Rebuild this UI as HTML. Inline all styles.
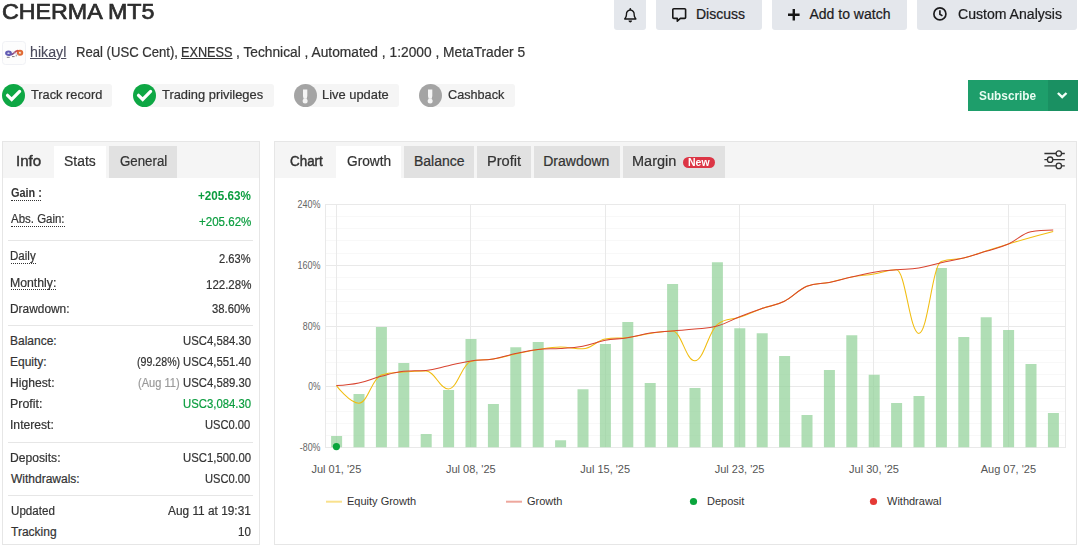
<!DOCTYPE html>
<html lang="en">
<head>
<meta charset="utf-8">
<title>CHERMA MT5</title>
<style>
html,body{margin:0;padding:0;background:#fff;}
body{width:1079px;height:546px;position:relative;overflow:hidden;font-family:"Liberation Sans",sans-serif;color:#333;}
.a{position:absolute;box-sizing:border-box;}
.t{position:absolute;white-space:pre;transform-origin:0 50%;}
.btn{position:absolute;top:-6px;height:35.8px;background:#e4e7ec;border-radius:3px;}
.badge{position:absolute;top:84.1px;height:22.7px;background:#f5f5f5;border-radius:3px;}
.ci{position:absolute;top:83.8px;width:23px;height:23px;border-radius:50%;}
.panel{position:absolute;box-sizing:border-box;border:1px solid #e6e6e6;background:#fff;}
.hd{position:absolute;background:#f5f5f5;}
.tab{position:absolute;top:146.3px;height:31.4px;background:#e1e1e1;}
.tab.on{background:#fff;}
.sep{position:absolute;left:8px;width:245px;height:1px;background:#e6e6e6;}
.dot{position:absolute;height:0;border-bottom:1px dotted #333;}
svg.i{position:absolute;overflow:visible;}
</style>
</head>
<body>
<div id="w" style="position:absolute;left:0;top:0;width:1079px;height:546px;">
<!-- top buttons -->
<div class="btn" style="left:613.9px;width:32.1px"></div>
<div class="btn" style="left:656px;width:105.8px"></div>
<div class="btn" style="left:771.8px;width:135px"></div>
<div class="btn" style="left:916.8px;width:160px"></div>
<!-- bell -->
<svg class="i" style="left:623.7px;top:7.7px" width="12.6" height="14.4" viewBox="0 0 448 512"><path fill="#161616" d="M224 0c-17.700 0-32 14.300-32 32V51.200C119 66 64 130.600 64 208v25.400c0 45.400-15.500 89.500-43.800 124.900L5.300 377c-5.800 7.200-6.900 17.100-2.900 25.400S14.800 416 24 416H424c9.200 0 17.600-5.300 21.600-13.600s2.900-18.200-2.900-25.400l-14.900-18.600C399.500 322.900 384 278.800 384 233.400V208c0-77.400-55-142-128-156.800V32c0-17.700-14.300-32-32-32zm0 96c61.900 0 112 50.100 112 112v25.400c0 47.900 13.900 94.600 39.700 134.600H72.300C98.100 328 112 281.300 112 233.400V208c0-61.900 50.100-112 112-112zm64 352H224 160c0 17 6.700 33.300 18.700 45.300s28.300 18.700 45.300 18.700s33.300-6.700 45.300-18.700s18.700-28.300 18.700-45.300z"/></svg>
<!-- comment -->
<svg class="i" style="left:672px;top:7.9px" width="14.4" height="14" viewBox="0 0 14.4 14"><path fill="none" stroke="#161616" stroke-width="1.6" stroke-linejoin="round" d="M1.800 .8h10.800a1 1 0 0 1 1 1v7.600a1 1 0 0 1 -1 1H8.400L5.300 13.200V10.400H1.800a1 1 0 0 1 -1 -1V1.800a1 1 0 0 1 1 -1z"/></svg>
<!-- plus -->
<svg class="i" style="left:787.5px;top:8.6px" width="11.6" height="11.6" viewBox="0 0 12 12"><path fill="none" stroke="#161616" stroke-width="2.5" d="M6 0V12M0 6H12"/></svg>
<!-- clock -->
<svg class="i" style="left:933.1px;top:7.4px" width="13.800" height="13.800" viewBox="0 0 14 14"><circle cx="7" cy="7" r="6.100" fill="none" stroke="#1c1c1e" stroke-width="1.700"/><path fill="none" stroke="#1c1c1e" stroke-width="1.700" d="M7 3.300V7.300L9.600 9"/></svg>

<!-- avatar -->
<div class="a" style="left:2.2px;top:41.3px;width:23.6px;height:23.3px;border:1px solid #f0f1f5;border-radius:3.5px;background:#fdfdfd"></div>
<svg class="i" style="left:2px;top:41px" width="24" height="24" viewBox="2 41 24 24"><defs><linearGradient id="lg" x1="0" x2="1" y1="0" y2="0"><stop offset="0" stop-color="#6a52a8"/><stop offset="1" stop-color="#d8483c"/></linearGradient><filter id="bl" x="-20%" y="-20%" width="140%" height="140%"><feGaussianBlur stdDeviation=".6"/></filter></defs><g filter="url(#bl)" fill="none" stroke-linecap="round"><ellipse cx="8.500" cy="53.200" rx="2.300" ry="1.700" stroke="#625cb4" stroke-width="2.200"/><ellipse cx="20" cy="52.700" rx="2.200" ry="1.900" stroke="#e06a35" stroke-width="2.100"/><circle cx="20.300" cy="53.100" r=".9" fill="#e9b98f" stroke="none"/><path d="M11 54.600C13.500 54.800 14.500 51 17.800 50.600" stroke="url(#lg)" stroke-width="1.600"/><path d="M13 51.800C14.500 53 16 54.500 18 54.800" stroke="#b9b3cf" stroke-width=".7"/><path d="M7.200 57.300H9.300M12.400 56.600H14.200" stroke="#5c5560" stroke-width=".8"/><circle cx="16.200" cy="55.700" r=".5" fill="#333" stroke="none"/></g></svg>

<!-- badges -->
<div class="badge" style="left:12px;width:100.4px"></div>
<div class="badge" style="left:143px;width:130.5px"></div>
<div class="badge" style="left:304px;width:94.9px"></div>
<div class="badge" style="left:429px;width:85.6px"></div>
<div class="ci" style="left:2px;background:#0ea744"></div>
<div class="ci" style="left:132.9px;background:#0ea744"></div>
<div class="ci" style="left:293.9px;background:#a4a4a4"></div>
<div class="ci" style="left:418.9px;background:#a4a4a4"></div>
<svg class="i" style="left:2px;top:83.8px" width="23" height="23" viewBox="0 0 23 23"><path d="M5.500 11.300L9.700 15.400L17.600 7.400" fill="none" stroke="#fff" stroke-width="3.200" stroke-linecap="round" stroke-linejoin="miter"/></svg>
<svg class="i" style="left:132.9px;top:83.8px" width="23" height="23" viewBox="0 0 23 23"><path d="M5.500 11.300L9.700 15.400L17.600 7.400" fill="none" stroke="#fff" stroke-width="3.200" stroke-linecap="round" stroke-linejoin="miter"/></svg>
<svg class="i" style="left:293.9px;top:83.800px" width="23" height="23" viewBox="0 0 23 23"><path d="M9 5.400h4.300v6.500l-.6 2.900h-3.100l-.6 -2.900z" fill="#f4f4f4"/><circle cx="11.150" cy="17" r="2.500" fill="#f4f4f4"/></svg>
<svg class="i" style="left:418.9px;top:83.800px" width="23" height="23" viewBox="0 0 23 23"><path d="M9 5.400h4.300v6.500l-.6 2.900h-3.100l-.6 -2.900z" fill="#f4f4f4"/><circle cx="11.150" cy="17" r="2.500" fill="#f4f4f4"/></svg>

<!-- subscribe -->
<div class="a" style="left:967.8px;top:80px;width:110px;height:30.5px;background:#1e9e6b"></div>
<div class="a" style="left:1047.8px;top:80px;width:30px;height:30.500px;background:#1a9062"></div>
<svg class="i" style="left:1057.400px;top:91.600px" width="10.400" height="6.800" viewBox="0 0 10.400 6.800"><path d="M.9 1L5.200 5.200L9.500 1" fill="none" stroke="#f2fff8" stroke-width="2.400"/></svg>

<!-- left panel -->
<div class="panel" style="left:2px;top:141px;width:257.5px;height:403.6px"></div>
<div class="hd" style="left:3px;top:142px;width:255.500px;height:35.700px"></div>
<div class="tab on" style="left:54px;width:51.500px"></div>
<div class="tab" style="left:109px;width:67.800px"></div>
<div class="sep" style="top:240px"></div>
<div class="sep" style="top:325px"></div>
<div class="sep" style="top:442px"></div>
<div class="sep" style="top:495px"></div>
<div class="dot" style="left:11px;width:30px;top:200px"></div>
<div class="dot" style="left:11px;width:53.500px;top:226px"></div>
<div class="dot" style="left:11px;width:25px;top:262.600px"></div>
<div class="dot" style="left:11px;width:45px;top:289px"></div>

<!-- chart panel -->
<div class="panel" style="left:274px;top:141px;width:803px;height:403.600px"></div>
<div class="hd" style="left:275px;top:142px;width:801px;height:35.700px"></div>
<div class="tab on" style="left:336px;width:65px"></div>
<div class="tab" style="left:404px;width:69.800px"></div>
<div class="tab" style="left:476.800px;width:54px"></div>
<div class="tab" style="left:534px;width:86px"></div>
<div class="tab" style="left:623px;width:102px"></div>
<div class="a" style="left:682.500px;top:157px;width:32.500px;height:10.600px;border-radius:6px;background:#dc3545"></div>
<!-- sliders icon -->
<svg class="i" style="left:1044px;top:150px" width="21" height="20" viewBox="0 0 21 20"><g fill="none" stroke="#333" stroke-width="1.3"><path d="M.4 3.500H12M17.600 3.500H20.800M.4 9.700H3.300M8.900 9.700H20.800M.4 15.900H12M17.600 15.900H20.800"/><circle cx="14.800" cy="3.500" r="2.700"/><circle cx="6.100" cy="9.700" r="2.700"/><circle cx="14.800" cy="15.900" r="2.700"/></g></svg>
<svg class="chart" width="1079" height="546" viewBox="0 0 1079 546" style="position:absolute;left:0;top:0">
<path d="M325.0 216.50H1065.5M325.0 228.50H1065.5M325.0 240.50H1065.5M325.0 253.50H1065.5M325.0 277.50H1065.5M325.0 289.50H1065.5M325.0 301.50H1065.5M325.0 313.50H1065.5M325.0 338.50H1065.5M325.0 350.50H1065.5M325.0 362.50H1065.5M325.0 374.50H1065.5M325.0 398.50H1065.5M325.0 411.50H1065.5M325.0 423.50H1065.5M325.0 435.50H1065.5" stroke="#f8f8f8" stroke-width="1" fill="none" shape-rendering="crispEdges"/>
<path d="M325.0 204.50H1065.5M325.0 265.50H1065.5M325.0 326.50H1065.5M325.0 386.50H1065.5M325.0 447.50H1065.5M336.50 204.52V447.52M470.50 204.52V447.52M605.50 204.52V447.52M739.50 204.52V447.52M873.50 204.52V447.52M1008.50 204.52V447.52M325.5 204.52V447.52M1065.5 204.52V447.52" stroke="#e9e9e9" stroke-width="1" fill="none" shape-rendering="crispEdges"/>
<path d="M331.1 436.0h11V447.3h-11zM353.5 394.1h11V447.3h-11zM375.9 327.0h11V447.3h-11zM398.3 363.0h11V447.3h-11zM420.7 434.0h11V447.3h-11zM443.1 390.0h11V447.3h-11zM465.5 339.0h11V447.3h-11zM487.9 404.1h11V447.3h-11zM510.3 347.3h11V447.3h-11zM532.7 342.0h11V447.3h-11zM555.1 440.3h11V447.3h-11zM577.5 389.2h11V447.3h-11zM599.9 344.1h11V447.3h-11zM622.3 322.1h11V447.3h-11zM644.7 383.1h11V447.3h-11zM667.1 284.0h11V447.3h-11zM689.5 388.1h11V447.3h-11zM711.9 262.2h11V447.3h-11zM734.3 328.2h11V447.3h-11zM756.7 333.2h11V447.3h-11zM779.1 356.0h11V447.3h-11zM801.5 415.0h11V447.3h-11zM823.9 370.1h11V447.3h-11zM846.3 335.2h11V447.3h-11zM868.7 374.8h11V447.3h-11zM891.1 403.0h11V447.3h-11zM913.5 396.0h11V447.3h-11zM935.9 268.0h11V447.3h-11zM958.3 337.1h11V447.3h-11zM980.7 317.3h11V447.3h-11zM1003.1 330.1h11V447.3h-11zM1025.5 364.0h11V447.3h-11zM1047.9 413.0h11V447.3h-11z" fill="#8fd095" fill-opacity="0.7"/>
<path d="M336.4 385.6C336.4 385.6 349.8 403.2 358.8 403.2C367.8 403.2 372.2 378.0 381.2 375.0C390.2 372.0 394.6 372.8 403.6 372.0C412.6 371.2 417.0 371.0 426.0 371.0C435.0 371.0 439.4 388.9 448.4 388.9C457.4 388.9 461.8 364.2 470.8 361.6C479.8 359.0 484.2 360.5 493.2 359.0C502.2 357.5 506.6 355.9 515.6 354.0C524.6 352.1 529.0 350.9 538.0 349.5C547.0 348.1 551.4 347.0 560.4 347.0C569.4 347.0 573.8 348.8 582.8 348.8C591.8 348.8 596.2 340.7 605.2 339.1C614.2 337.5 618.6 338.6 627.6 337.5C636.6 336.4 641.0 334.8 650.0 333.5C659.0 332.2 663.4 331.0 672.4 331.0C681.4 331.0 685.8 360.8 694.8 360.8C703.8 360.8 708.2 331.9 717.2 324.6C726.2 317.3 730.6 320.5 739.6 317.3C748.6 314.1 753.0 311.7 762.0 308.5C771.0 305.3 775.4 305.7 784.4 301.2C793.4 296.7 797.8 290.0 806.8 286.2C815.8 282.4 820.2 284.2 829.2 282.4C838.2 280.6 842.6 278.8 851.6 277.1C860.6 275.4 865.0 275.4 874.0 273.9C883.0 272.4 887.4 269.8 896.4 269.8C905.4 269.8 909.8 333.4 918.8 333.4C927.8 333.4 932.2 265.2 941.2 261.6C950.2 258.0 954.6 260.1 963.6 258.0C972.6 255.9 977.0 253.8 986.0 251.0C995.0 248.2 999.4 246.7 1008.4 244.0C1017.4 241.3 1021.8 240.0 1030.8 237.5C1039.8 235.0 1053.2 231.4 1053.2 231.4" stroke="#f1bd10" stroke-width="1.05" fill="none" stroke-linejoin="round"/>
<path d="M336.4 385.6C336.4 385.6 349.8 384.9 358.8 383.0C367.8 381.1 372.2 378.5 381.2 376.2C390.2 373.9 394.6 372.2 403.6 371.3C412.6 370.4 417.0 371.3 426.0 370.4C435.0 369.5 439.4 367.6 448.4 365.7C457.4 363.8 461.8 362.3 470.8 361.0C479.8 359.7 484.2 360.5 493.2 359.0C502.2 357.5 506.6 355.5 515.6 353.6C524.6 351.7 529.0 350.3 538.0 349.4C547.0 348.5 551.4 349.1 560.4 348.5C569.4 347.9 573.8 347.8 582.8 346.2C591.8 344.6 596.2 342.0 605.2 340.3C614.2 338.6 618.6 339.2 627.6 337.7C636.6 336.2 641.0 334.4 650.0 333.0C659.0 331.6 663.4 331.7 672.4 330.9C681.4 330.1 685.8 330.1 694.8 329.1C703.8 328.1 708.2 328.6 717.2 326.1C726.2 323.6 730.6 320.2 739.6 316.7C748.6 313.2 753.0 311.6 762.0 308.5C771.0 305.4 775.4 305.7 784.4 301.2C793.4 296.7 797.8 290.0 806.8 286.2C815.8 282.4 820.2 284.2 829.2 282.4C838.2 280.6 842.6 279.1 851.6 277.1C860.6 275.1 865.0 273.7 874.0 272.2C883.0 270.7 887.4 270.6 896.4 269.8C905.4 269.0 909.8 269.4 918.8 268.0C927.8 266.6 932.2 264.7 941.2 262.7C950.2 260.7 954.6 260.3 963.6 258.0C972.6 255.7 977.0 254.1 986.0 251.3C995.0 248.5 999.4 247.9 1008.4 244.0C1017.4 240.1 1021.8 233.5 1030.8 231.7C1039.8 229.9 1053.2 229.9 1053.2 229.9" stroke="#d8432f" stroke-width="1.05" fill="none" stroke-linejoin="round"/>
<circle cx="336.4" cy="446.6" r="3.6" fill="#0aa53c"/>
<g font-family="'Liberation Sans', sans-serif" font-size="10" fill="#666" text-anchor="end">
<text x="320.4" y="208.1" textLength="23" lengthAdjust="spacingAndGlyphs">240%</text>
<text x="320.4" y="268.9" textLength="23" lengthAdjust="spacingAndGlyphs">160%</text>
<text x="320.4" y="329.6" textLength="17.6" lengthAdjust="spacingAndGlyphs">80%</text>
<text x="320.4" y="390.4" textLength="12.2" lengthAdjust="spacingAndGlyphs">0%</text>
<text x="320.4" y="451.1" textLength="20.6" lengthAdjust="spacingAndGlyphs">-80%</text>
</g>
<g font-family="'Liberation Sans', sans-serif" font-size="11" fill="#555" text-anchor="middle">
<text x="336.4" y="472.7">Jul 01, '25</text>
<text x="470.8" y="472.7">Jul 08, '25</text>
<text x="605.2" y="472.7">Jul 15, '25</text>
<text x="739.6" y="472.7">Jul 23, '25</text>
<text x="874.0" y="472.7">Jul 30, '25</text>
<text x="1008.4" y="472.7">Aug 07, '25</text>
</g>
<g font-family="'Liberation Sans', sans-serif" font-size="11" fill="#333">
<path d="M326 501.7H342" stroke="#f3c31c" stroke-opacity=".5" stroke-width="2"/>
<text x="347" y="504.7">Equity Growth</text>
<path d="M506 501.7H522" stroke="#dd4f3c" stroke-opacity=".5" stroke-width="2"/>
<text x="527" y="504.7">Growth</text>
<circle cx="693.5" cy="501.5" r="3.6" fill="#0aa53c"/>
<text x="707" y="504.7">Deposit</text>
<circle cx="873.5" cy="501.5" r="3.6" fill="#e53935"/>
<text x="887" y="504.7">Withdrawal</text>
</g>
</svg>
<span class="t" style="left:2.20px;top:1.42px;font:400 22.3px/22.3px 'Liberation Sans', sans-serif;color:#2d2d2d;transform:scaleX(1.0425);-webkit-text-stroke:0.7px #2d2d2d;">CHERMA MT5</span>
<span class="t" style="left:30.09px;top:44.85px;font:400 14px/14px 'Liberation Sans', sans-serif;color:#4a4a5c;transform:scaleX(1.0147);-webkit-text-stroke:0.12px #4a4a5c;text-decoration:underline;text-underline-offset:1px;">hikayl</span>
<span class="t" style="left:75.56px;top:44.85px;font:400 14px/14px 'Liberation Sans', sans-serif;color:#333;transform:scaleX(0.9355);-webkit-text-stroke:0.22px #333;">Real (USC Cent),</span>
<span class="t" style="left:180.59px;top:44.85px;font:400 14px/14px 'Liberation Sans', sans-serif;color:#333;transform:scaleX(0.9071);-webkit-text-stroke:0.22px #333;text-decoration:underline;text-underline-offset:1px;">EXNESS</span>
<span class="t" style="left:236.02px;top:44.85px;font:400 14px/14px 'Liberation Sans', sans-serif;color:#333;transform:scaleX(0.9829);-webkit-text-stroke:0.22px #333;">, Technical , Automated , 1:2000 , MetaTrader 5</span>
<span class="t" style="left:31.20px;top:87.69px;font:400 13px/13px 'Liberation Sans', sans-serif;color:#333;transform:scaleX(0.9833);-webkit-text-stroke:0.22px #333;">Track record</span>
<span class="t" style="left:162.00px;top:87.69px;font:400 13px/13px 'Liberation Sans', sans-serif;color:#333;transform:scaleX(0.9902);-webkit-text-stroke:0.22px #333;">Trading privileges</span>
<span class="t" style="left:321.81px;top:87.69px;font:400 13px/13px 'Liberation Sans', sans-serif;color:#333;transform:scaleX(0.9924);-webkit-text-stroke:0.22px #333;">Live update</span>
<span class="t" style="left:448.00px;top:87.69px;font:400 13px/13px 'Liberation Sans', sans-serif;color:#333;transform:scaleX(0.9741);-webkit-text-stroke:0.22px #333;">Cashback</span>
<span class="t" style="left:696.00px;top:7.15px;font:400 14px/14px 'Liberation Sans', sans-serif;color:#1c1c1e;transform:scaleX(1.0000);-webkit-text-stroke:0.22px #1c1c1e;">Discuss</span>
<span class="t" style="left:809.50px;top:7.15px;font:400 14px/14px 'Liberation Sans', sans-serif;color:#1c1c1e;transform:scaleX(1.0000);-webkit-text-stroke:0.22px #1c1c1e;">Add to watch</span>
<span class="t" style="left:957.50px;top:7.15px;font:400 14px/14px 'Liberation Sans', sans-serif;color:#1c1c1e;transform:scaleX(1.0049);-webkit-text-stroke:0.22px #1c1c1e;">Custom Analysis</span>
<span class="t" style="left:979.20px;top:88.99px;font:700 13px/13px 'Liberation Sans', sans-serif;color:#e9fcf2;transform:scaleX(0.9095);">Subscribe</span>
<span class="t" style="left:15.92px;top:153.95px;font:400 14px/14px 'Liberation Sans', sans-serif;color:#333;transform:scaleX(1.0795);-webkit-text-stroke:0.42px #333;">Info</span>
<span class="t" style="left:64.20px;top:153.95px;font:400 14px/14px 'Liberation Sans', sans-serif;color:#333;transform:scaleX(0.9937);-webkit-text-stroke:0.22px #333;">Stats</span>
<span class="t" style="left:120.00px;top:153.95px;font:400 14px/14px 'Liberation Sans', sans-serif;color:#333;transform:scaleX(0.9490);-webkit-text-stroke:0.22px #333;">General</span>
<span class="t" style="left:289.50px;top:153.95px;font:400 14px/14px 'Liberation Sans', sans-serif;color:#333;transform:scaleX(0.9571);-webkit-text-stroke:0.45px #333;">Chart</span>
<span class="t" style="left:346.75px;top:153.95px;font:400 14px/14px 'Liberation Sans', sans-serif;color:#333;transform:scaleX(0.9778);-webkit-text-stroke:0.22px #333;">Growth</span>
<span class="t" style="left:414.00px;top:153.95px;font:400 14px/14px 'Liberation Sans', sans-serif;color:#333;transform:scaleX(1.0000);-webkit-text-stroke:0.22px #333;">Balance</span>
<span class="t" style="left:486.56px;top:153.95px;font:400 14px/14px 'Liberation Sans', sans-serif;color:#333;transform:scaleX(1.0437);-webkit-text-stroke:0.22px #333;">Profit</span>
<span class="t" style="left:543.25px;top:153.95px;font:400 14px/14px 'Liberation Sans', sans-serif;color:#333;transform:scaleX(1.0000);-webkit-text-stroke:0.22px #333;">Drawdown</span>
<span class="t" style="left:631.96px;top:153.95px;font:400 14px/14px 'Liberation Sans', sans-serif;color:#333;transform:scaleX(1.0366);-webkit-text-stroke:0.22px #333;">Margin</span>
<span class="t" style="left:688.00px;top:157.63px;font:700 10px/10px 'Liberation Sans', sans-serif;color:#fff;transform:scaleX(1.0476);">New</span>
<span class="t" style="left:11.00px;top:186.84px;font:700 12px/12px 'Liberation Sans', sans-serif;color:#333;transform:scaleX(0.9091);">Gain :</span>
<span class="t" style="left:198.00px;top:189.54px;font:700 12px/12px 'Liberation Sans', sans-serif;color:#0b9d3f;transform:scaleX(0.9722);">+205.63%</span>
<span class="t" style="left:11.00px;top:213.34px;font:400 12px/12px 'Liberation Sans', sans-serif;color:#333;transform:scaleX(0.9554);-webkit-text-stroke:0.2px #333;">Abs. Gain:</span>
<span class="t" style="left:198.50px;top:215.54px;font:400 12px/12px 'Liberation Sans', sans-serif;color:#0b9d3f;transform:scaleX(0.9630);-webkit-text-stroke:0.2px #0b9d3f;">+205.62%</span>
<span class="t" style="left:10.04px;top:250.34px;font:400 12px/12px 'Liberation Sans', sans-serif;color:#333;transform:scaleX(0.9615);-webkit-text-stroke:0.2px #333;">Daily</span>
<span class="t" style="left:219.00px;top:252.54px;font:400 12px/12px 'Liberation Sans', sans-serif;color:#333;transform:scaleX(0.9265);-webkit-text-stroke:0.2px #333;">2.63%</span>
<span class="t" style="left:9.98px;top:277.14px;font:400 12px/12px 'Liberation Sans', sans-serif;color:#333;transform:scaleX(1.0227);-webkit-text-stroke:0.2px #333;">Monthly:</span>
<span class="t" style="left:205.50px;top:279.14px;font:400 12px/12px 'Liberation Sans', sans-serif;color:#333;transform:scaleX(0.9574);-webkit-text-stroke:0.2px #333;">122.28%</span>
<span class="t" style="left:10.01px;top:303.14px;font:400 12px/12px 'Liberation Sans', sans-serif;color:#333;transform:scaleX(0.9915);-webkit-text-stroke:0.2px #333;">Drawdown:</span>
<span class="t" style="left:212.00px;top:303.14px;font:400 12px/12px 'Liberation Sans', sans-serif;color:#333;transform:scaleX(0.9390);-webkit-text-stroke:0.2px #333;">38.60%</span>
<span class="t" style="left:10.00px;top:335.14px;font:400 12px/12px 'Liberation Sans', sans-serif;color:#333;transform:scaleX(1.0000);-webkit-text-stroke:0.2px #333;">Balance:</span>
<span class="t" style="left:182.50px;top:335.14px;font:400 12px/12px 'Liberation Sans', sans-serif;color:#333;transform:scaleX(0.9444);-webkit-text-stroke:0.2px #333;">USC4,584.30</span>
<span class="t" style="left:10.00px;top:356.14px;font:400 12px/12px 'Liberation Sans', sans-serif;color:#333;transform:scaleX(1.0000);-webkit-text-stroke:0.2px #333;">Equity:</span>
<span class="t" style="left:182.50px;top:356.14px;font:400 12px/12px 'Liberation Sans', sans-serif;color:#333;transform:scaleX(0.9444);-webkit-text-stroke:0.2px #333;">USC4,551.40</span>
<span class="t" style="left:9.99px;top:377.14px;font:400 12px/12px 'Liberation Sans', sans-serif;color:#333;transform:scaleX(1.0116);-webkit-text-stroke:0.2px #333;">Highest:</span>
<span class="t" style="left:182.50px;top:377.14px;font:400 12px/12px 'Liberation Sans', sans-serif;color:#333;transform:scaleX(0.9444);-webkit-text-stroke:0.2px #333;">USC4,589.30</span>
<span class="t" style="left:9.97px;top:398.14px;font:400 12px/12px 'Liberation Sans', sans-serif;color:#333;transform:scaleX(1.0333);-webkit-text-stroke:0.2px #333;">Profit:</span>
<span class="t" style="left:182.50px;top:398.14px;font:400 12px/12px 'Liberation Sans', sans-serif;color:#0b9d3f;transform:scaleX(0.9444);-webkit-text-stroke:0.2px #0b9d3f;">USC3,084.30</span>
<span class="t" style="left:9.99px;top:419.24px;font:400 12px/12px 'Liberation Sans', sans-serif;color:#333;transform:scaleX(1.0119);-webkit-text-stroke:0.2px #333;">Interest:</span>
<span class="t" style="left:205.00px;top:419.24px;font:400 12px/12px 'Liberation Sans', sans-serif;color:#333;transform:scaleX(0.9286);-webkit-text-stroke:0.2px #333;">USC0.00</span>
<span class="t" style="left:9.99px;top:452.24px;font:400 12px/12px 'Liberation Sans', sans-serif;color:#333;transform:scaleX(1.0102);-webkit-text-stroke:0.2px #333;">Deposits:</span>
<span class="t" style="left:182.50px;top:452.24px;font:400 12px/12px 'Liberation Sans', sans-serif;color:#333;transform:scaleX(0.9444);-webkit-text-stroke:0.2px #333;">USC1,500.00</span>
<span class="t" style="left:11.00px;top:473.34px;font:400 12px/12px 'Liberation Sans', sans-serif;color:#333;transform:scaleX(1.0000);-webkit-text-stroke:0.2px #333;">Withdrawals:</span>
<span class="t" style="left:205.00px;top:473.34px;font:400 12px/12px 'Liberation Sans', sans-serif;color:#333;transform:scaleX(0.9286);-webkit-text-stroke:0.2px #333;">USC0.00</span>
<span class="t" style="left:11.00px;top:505.34px;font:400 12px/12px 'Liberation Sans', sans-serif;color:#333;transform:scaleX(0.9667);-webkit-text-stroke:0.2px #333;">Updated</span>
<span class="t" style="left:167.50px;top:505.34px;font:400 12px/12px 'Liberation Sans', sans-serif;color:#333;transform:scaleX(0.9881);-webkit-text-stroke:0.2px #333;">Aug 11 at 19:31</span>
<span class="t" style="left:11.00px;top:526.34px;font:400 12px/12px 'Liberation Sans', sans-serif;color:#333;transform:scaleX(1.0000);-webkit-text-stroke:0.2px #333;">Tracking</span>
<span class="t" style="left:238.00px;top:526.34px;font:400 12px/12px 'Liberation Sans', sans-serif;color:#333;transform:scaleX(0.9615);-webkit-text-stroke:0.2px #333;">10</span>
<span class="t" style="left:136.50px;top:356.14px;font:400 12px/12px 'Liberation Sans', sans-serif;color:#333;transform:scaleX(0.8854);-webkit-text-stroke:0.2px #333;">(99.28%)</span>
<span class="t" style="left:137.50px;top:377.14px;font:400 12px/12px 'Liberation Sans', sans-serif;color:#9a9a9a;transform:scaleX(0.9222);-webkit-text-stroke:0.2px #9a9a9a;">(Aug 11)</span>
</div>
</body>
</html>
